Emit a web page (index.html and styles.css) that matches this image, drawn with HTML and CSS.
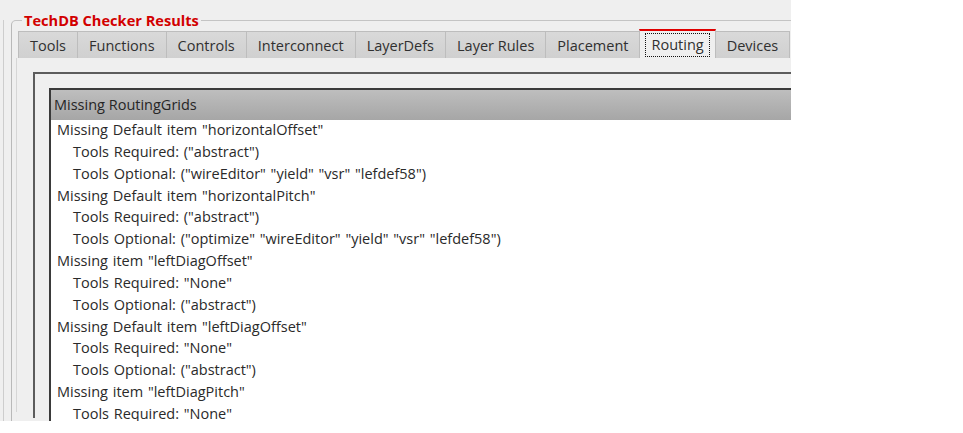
FILE: index.html
```html
<!DOCTYPE html>
<html>
<head>
<meta charset="utf-8">
<link rel="stylesheet" href="styles.css">
</head>
<body>
<div class="window">
  <div class="edge">
    <div class="group">
      <div class="group-title">TechDB Checker Results</div>
      <div class="tabs">
        <div class="tab">Tools</div>
        <div class="tab">Functions</div>
        <div class="tab">Controls</div>
        <div class="tab">Interconnect</div>
        <div class="tab">LayerDefs</div>
        <div class="tab">Layer Rules</div>
        <div class="tab">Placement</div>
        <div class="tab tab-active"><span class="focus">Routing</span></div>
        <div class="tab">Devices</div>
      </div>
      <div class="pane">
        <div class="outer-frame">
          <div class="inner-box">
            <div class="header">Missing RoutingGrids</div>
            <div class="list">
              <div class="item">Missing Default item "horizontalOffset"</div>
              <div class="item sub">Tools Required: ("abstract")</div>
              <div class="item sub">Tools Optional: ("wireEditor" "yield" "vsr" "lefdef58")</div>
              <div class="item">Missing Default item "horizontalPitch"</div>
              <div class="item sub">Tools Required: ("abstract")</div>
              <div class="item sub">Tools Optional: ("optimize" "wireEditor" "yield" "vsr" "lefdef58")</div>
              <div class="item">Missing item "leftDiagOffset"</div>
              <div class="item sub">Tools Required: "None"</div>
              <div class="item sub">Tools Optional: ("abstract")</div>
              <div class="item">Missing Default item "leftDiagOffset"</div>
              <div class="item sub">Tools Required: "None"</div>
              <div class="item sub">Tools Optional: ("abstract")</div>
              <div class="item">Missing item "leftDiagPitch"</div>
              <div class="item sub">Tools Required: "None"</div>
            </div>
          </div>
        </div>
      </div>
    </div>
  </div>
</div>
</body>
</html>
```
FILE: styles.css
```css
html, body {
  margin: 0;
  padding: 0;
  background: #ffffff;
}
body {
  font-family: "Open Sans", "DejaVu Sans", sans-serif;
  color: #2a2a2a;
}
.window {
  width: 791px;
  height: 421px;
  background: #efefef;
  overflow: hidden;
}
.edge {
  margin-left: 3px;
  height: 100%;
  border-left: 1px solid #cdcdcd;
  padding-left: 7px;
  box-sizing: border-box;
}
.group {
  margin-top: 20px;
  border-top: 1px solid #c4c4c4;
  border-left: 1px solid #b9b9b9;
  border-top-left-radius: 5px;
  padding-left: 4px;
  height: 400px;
}
.group-title {
  display: block;
  width: fit-content;
  height: 16px;
  margin-top: -9px;
  margin-left: 6px;
  padding: 0 2px;
  background: #efefef;
  color: #d20000;
  font-weight: bold;
  font-size: 14.6px;
  line-height: 16px;
}
.tabs {
  display: flex;
  align-items: flex-end;
  height: 29px;
  margin-top: 1px;
  margin-left: 2px;
}
.tab {
  height: 27px;
  box-sizing: border-box;
  padding: 1px 11px 0 11px;
  border: 1px solid #bdbdbd;
  border-bottom: none;
  margin-right: -1px;
  background: linear-gradient(#d9d9d9, #d0d0d0);
  font-size: 14.5px;
  line-height: 25px;
  color: #303030;
  white-space: nowrap;
}
.tab-active {
  height: 29px;
  background: #efefef;
  border-top: 2px solid #e00000;
  padding: 2px 5px 1px 5px;
  line-height: 24px;
  position: relative;
  z-index: 1;
}
.focus {
  display: block;
  border: 1px dotted #111;
  padding: 0 5px;
  height: 24px;
  box-sizing: border-box;
  line-height: 22px;
}
.pane {
  border-left: 1px solid #d6d6d6;
  padding: 14px 0 0 16px;
  height: 340px;
}
.outer-frame {
  border-top: 2px solid #5c5c5c;
  border-left: 2px solid #5c5c5c;
  padding: 14px 0 0 14px;
  width: 900px;
  height: 330px;
}
.inner-box {
  border-top: 2px solid #3a3a3a;
  border-left: 2px solid #3a3a3a;
  background: #ffffff;
  height: 331px;
}
.header {
  height: 30px;
  background: linear-gradient(#bebebe, #a6a6a6);
  font-size: 14.5px;
  line-height: 30px;
  padding-left: 3px;
  color: #262626;
}
.list {
  display: flex;
  flex-direction: column;
  gap: 7.85px;
  padding: 3px 0 0 6px;
  font-size: 14.5px;
  word-spacing: 1px;
  line-height: 14px;
}
.sub {
  padding-left: 16px;
}
```
